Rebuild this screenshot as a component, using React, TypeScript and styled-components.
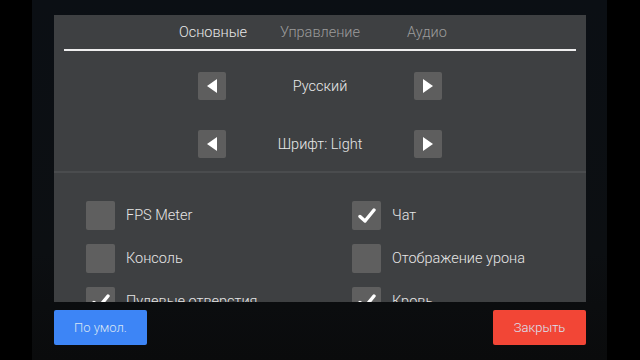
import { FC } from 'react'
import styled, { createGlobalStyle } from 'styled-components'

const GlobalStyle = createGlobalStyle`
  html, body {
    margin: 0;
    padding: 0;
    background: #000000;
    font-family: Roboto, 'Noto Sans', sans-serif;
  }
`

const Screen = styled.div`
  width: 640px;
  height: 360px;
  display: flex;
  background: #000000;
  overflow: hidden;
`

const Viewport = styled.div`
  width: 575px;
  margin-left: 32px;
  background: linear-gradient(180deg, #0b0f14 0%, #0c0f12 70%, #0a0b0c 100%);
  display: flex;
  flex-direction: column;
  padding: 15px 21px 0 22px;
  box-sizing: border-box;
`

const Panel = styled.div`
  height: 287px;
  flex-shrink: 0;
  background: #3e4042;
  display: flex;
  flex-direction: column;
  overflow: hidden;

  & > * {
    flex-shrink: 0;
  }
`

const Tabs = styled.div`
  display: flex;
  justify-content: center;
  height: 34px;
  margin: 0 10px;
  border-bottom: 2px solid #eeeeee;
`

const Tab = styled.div<{ $active?: boolean }>`
  width: 107px;
  text-align: center;
  padding-top: 9px;
  font-size: 14.5px;
  font-weight: 300;
  color: ${({ $active }) => ($active ? '#e8e8e8' : '#9c9c9c')};
`

const Selectors = styled.div`
  display: flex;
  flex-direction: column;
  gap: 30px;
  padding: 21px 0 13px;
  border-bottom: 2px solid #4a4c4e;
`

const SelectorRow = styled.div`
  display: flex;
  justify-content: center;
  align-items: center;
`

const ArrowButton = styled.div`
  width: 28px;
  height: 28px;
  background: #5e5e5e;
  border-radius: 2px;
  display: flex;
  align-items: center;
  justify-content: center;
`

const SelectorLabel = styled.div`
  width: 188px;
  text-align: center;
  font-size: 14.5px;
  font-weight: 300;
  color: #e8e8e8;
`

const Options = styled.div`
  display: grid;
  grid-template-columns: 1fr 1fr;
  row-gap: 14px;
  padding-top: 28px;
`

const Option = styled.div`
  display: flex;
  align-items: center;
  gap: 11px;
  padding-left: 32px;
`

const Box = styled.div`
  width: 29px;
  height: 29px;
  background: #5f5f5f;
  border-radius: 2px;
  display: flex;
  align-items: center;
  justify-content: center;
  flex-shrink: 0;
`

const OptionLabel = styled.span`
  font-size: 14.5px;
  font-weight: 300;
  color: #e6e6e6;
`

const Footer = styled.div`
  display: flex;
  justify-content: space-between;
  padding-top: 8px;
`

const FooterButton = styled.div<{ $color: string }>`
  width: 93px;
  height: 35px;
  border-radius: 2px;
  background: ${({ $color }) => $color};
  color: #d8e4f4;
  font-size: 13px;
  font-weight: 300;
  display: flex;
  align-items: center;
  justify-content: center;
`

const Arrow: FC<{ dir: 'left' | 'right' }> = ({ dir }) => (
  <svg width="12" height="14" viewBox="0 0 12 14">
    {dir === 'left' ? <polygon points="11,0 11,14 1,7" fill="#ffffff" /> : <polygon points="1,0 1,14 11,7" fill="#ffffff" />}
  </svg>
)

const Check: FC = () => (
  <svg width="18" height="16" viewBox="0 0 18 16">
    <polyline points="2,8.5 7,13 16,2" fill="none" stroke="#ffffff" strokeWidth="3.4" strokeLinecap="round" strokeLinejoin="round" />
  </svg>
)

const options = [
  { label: 'FPS Meter', checked: false },
  { label: 'Чат', checked: true },
  { label: 'Консоль', checked: false },
  { label: 'Отображение урона', checked: false },
  { label: 'Пулевые отверстия', checked: true },
  { label: 'Кровь', checked: true },
]

const App: FC = () => (
  <>
    <GlobalStyle />
    <Screen>
      <Viewport>
        <Panel>
          <Tabs>
            <Tab $active>Основные</Tab>
            <Tab>Управление</Tab>
            <Tab>Аудио</Tab>
          </Tabs>
          <Selectors>
            {['Русский', 'Шрифт: Light'].map(label => (
              <SelectorRow key={label}>
                <ArrowButton>
                  <Arrow dir="left" />
                </ArrowButton>
                <SelectorLabel>{label}</SelectorLabel>
                <ArrowButton>
                  <Arrow dir="right" />
                </ArrowButton>
              </SelectorRow>
            ))}
          </Selectors>
          <Options>
            {options.map(o => (
              <Option key={o.label}>
                <Box>{o.checked && <Check />}</Box>
                <OptionLabel>{o.label}</OptionLabel>
              </Option>
            ))}
          </Options>
        </Panel>
        <Footer>
          <FooterButton $color="#3d85f6">По умол.</FooterButton>
          <FooterButton $color="#f24636">Закрыть</FooterButton>
        </Footer>
      </Viewport>
    </Screen>
  </>
)

export default App
